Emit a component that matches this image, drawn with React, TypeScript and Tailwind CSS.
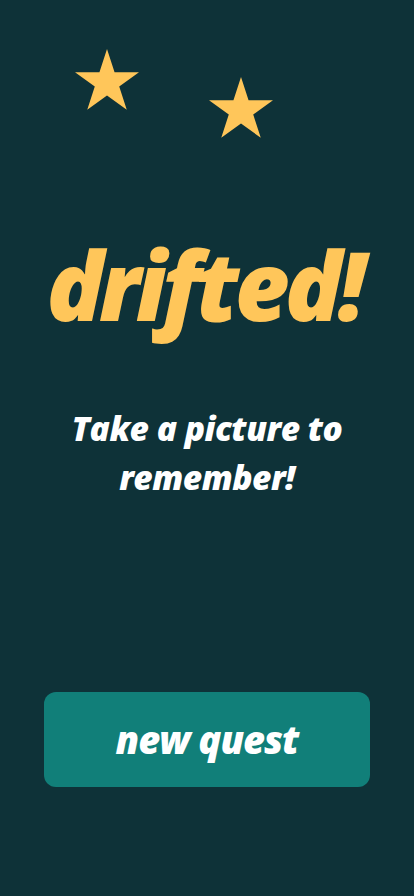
import React from 'react';

const Star: React.FC<{ className?: string }> = ({ className }) => (
  <svg viewBox="0 0 64 61" className={className} fill="#ffc65a">
    <polygon points="32,0 39.55,23.2 64,23.22 44.22,37.57 51.75,60.78 32,46.45 12.25,60.78 19.78,37.57 0,23.22 24.45,23.2" />
  </svg>
);

const App: React.FC = () => {
  return (
    <div className="min-h-screen w-full bg-[#0e3238] flex flex-col font-['Open_Sans',sans-serif] italic">
      {/* Stars */}
      <div className="flex items-start pt-[49px] pl-[75px] gap-[70px]">
        <Star className="w-[64px] h-[61px]" />
        <Star className="w-[64px] h-[61px] mt-[28px]" />
      </div>

      {/* Title */}
      <h1 className="mt-[91px] pr-[6px] text-center text-[95px] leading-[110px] font-extrabold tracking-[-4.8px] text-[#ffc65a]">
        drifted!
      </h1>

      <p className="mt-[65px] px-8 text-center text-[33.5px] leading-[49px] font-extrabold tracking-[-0.5px] text-white">
        Take a picture to
        <br />
        remember!
      </p>

      <div className="mt-auto px-[44px] pb-[109px]">
        <button className="w-full h-[95px] rounded-xl bg-[#117f79] text-white text-[38px] font-extrabold tracking-[-1px]">
          new quest
        </button>
      </div>
    </div>
  );
};

export default App;
